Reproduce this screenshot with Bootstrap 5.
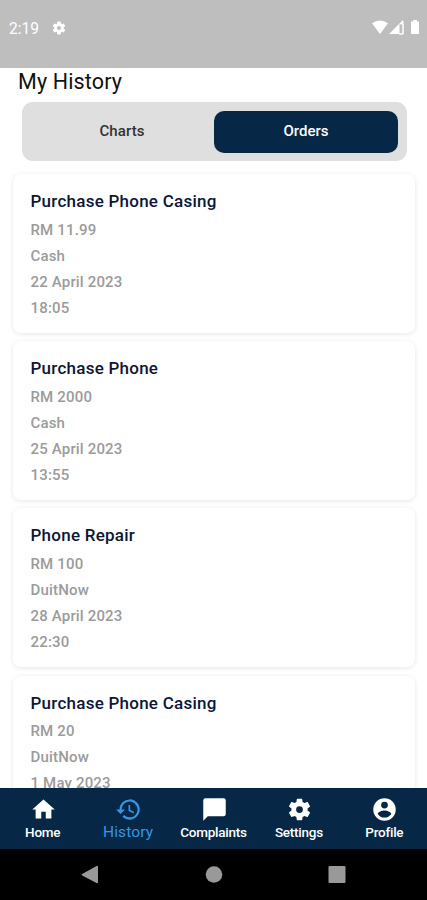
<!DOCTYPE html>
<html lang="en">
<head>
<meta charset="utf-8">
<meta name="viewport" content="width=device-width, initial-scale=1">
<title>My History</title>
<link href="https://cdn.jsdelivr.net/npm/bootstrap@5.3.0/dist/css/bootstrap.min.css" rel="stylesheet">
<style>
body{font-family:Roboto,"Liberation Sans",sans-serif;color:#111;background:#fff}
.phone{height:900px;width:427px}
.status-bar{height:67.5px;background:#bebebe;color:#fff;padding:0 7px 0 9px}
.status-row{height:55px}
.clock{font-size:15.6px;line-height:20px;padding-top:2px}
.page-title{font-size:21.5px;line-height:26px;padding:1px 0 0 18px;margin:0;font-weight:400;letter-spacing:.15px;height:34.5px;color:#111}
.switcher{margin:0 20.5px 0 21.5px;height:59px;padding:8.5px;background:#dfdfdf;border-radius:11px}
.switcher .btn{font-size:15px;font-weight:500;border:0;border-radius:10px;padding:0 0 1px;color:#333;letter-spacing:.1px}
.switcher .btn.active{background:#062745;color:#fff;letter-spacing:0}
.orders{padding:13px 12px 0 13px;gap:8.3px}
.order{flex:none;height:158.9px;border:0;border-radius:8px;padding:15px 17.5px 0;box-shadow:0 1px 5px rgba(0,0,0,.1)}
.order h2{font-size:17px;line-height:24px;margin:0 0 3.500px;font-weight:500;color:#0d1633;letter-spacing:.25px}
.order p{font-size:15px;line-height:26.1px;margin:0;font-weight:500;color:#9b9b9b;letter-spacing:.17px}
.tabs{height:61px;background:#062745}
.tabs a{flex:1 1 0;color:#fff;font-size:13.5px;line-height:18px;font-weight:500;letter-spacing:-.25px;padding-top:8px;width:0}
.tabs a.active{color:#3795e8;font-size:15.5px;font-weight:400;letter-spacing:.1px}
.tabs svg{margin-left:1px}
.system-nav{height:51px;background:#000;padding-left:81px}
</style>
</head>
<body>
<div class="phone d-flex flex-column overflow-hidden">
  <header class="status-bar flex-shrink-0">
    <div class="status-row d-flex align-items-center">
      <span class="clock me-1">2:19</span>
      <svg class="ms-2" width="16" height="16" viewBox="0 0 24 24" fill="#fff"><use href="#gear"/></svg>
      <svg class="ms-auto" width="48" height="15" viewBox="0 0 48 15" fill="#fff"><path d="M0 3.200Q8 -2.200 16 3.200L8 14Z"/><path d="M17 14 31 0V4H27.500V14Z"/><path d="M28.500 4H31V14H27.500M31 .8V14H27" fill="none" stroke="#fff" stroke-width="1"/><path d="M39 1.500H41V0H45V1.500H47V14H39Z"/></svg>
    </div>
  </header>
  <h1 class="page-title flex-shrink-0">My History</h1>
  <div class="switcher d-flex flex-shrink-0">
    <button class="btn flex-fill w-50" type="button">Charts</button>
    <button class="btn flex-fill w-50 active" type="button">Orders</button>
  </div>
  <main class="orders d-flex flex-column flex-grow-1 overflow-hidden">
    <article class="card order"><h2>Purchase Phone Casing</h2><p>RM 11.99</p><p>Cash</p><p>22 April 2023</p><p>18:05</p></article>
    <article class="card order"><h2>Purchase Phone</h2><p>RM 2000</p><p>Cash</p><p>25 April 2023</p><p>13:55</p></article>
    <article class="card order"><h2>Phone Repair</h2><p>RM 100</p><p>DuitNow</p><p>28 April 2023</p><p>22:30</p></article>
    <article class="card order"><h2>Purchase Phone Casing</h2><p>RM 20</p><p>DuitNow</p><p>1 May 2023</p></article>
  </main>
  <nav class="tabs d-flex flex-shrink-0">
    <a href="#" class="d-flex flex-column align-items-center text-decoration-none"><svg width="27" height="27" viewBox="0 0 24 24" fill="currentColor"><path d="M10 20v-6h4v6h5v-8h3L12 3 2 12h3v8z"/></svg>Home</a>
    <a href="#" class="active d-flex flex-column align-items-center text-decoration-none"><svg width="27" height="27" viewBox="0 0 24 24" fill="currentColor"><path d="M13 3a9 9 0 0 0-9 9H1l3.890 3.890.07.14L9 12H6a7 7 0 1 1 2.060 4.940l-1.420 1.420A9 9 0 1 0 13 3zm-1 5v5l4.280 2.540.72-1.210-3.500-2.080V8z"/></svg>History</a>
    <a href="#" class="d-flex flex-column align-items-center text-decoration-none"><svg width="27" height="27" viewBox="0 0 24 24" fill="currentColor"><path d="M20 2H4a2 2 0 0 0-2 2v18l4-4h14a2 2 0 0 0 2-2V4a2 2 0 0 0-2-2z"/></svg>Complaints</a>
    <a href="#" class="d-flex flex-column align-items-center text-decoration-none"><svg width="27" height="27" viewBox="0 0 24 24" fill="currentColor"><path id="gear" d="M19.140 12.940c.04-.3.06-.61.06-.94 0-.32-.02-.64-.07-.94l2.030-1.580c.18-.14.23-.41.12-.61l-1.920-3.320c-.12-.22-.37-.29-.59-.22l-2.390.96c-.5-.38-1.030-.7-1.620-.94l-.36-2.540c-.04-.24-.24-.41-.48-.41h-3.840c-.24 0-.43.17-.47.41l-.36 2.540c-.59.24-1.130.57-1.620.94l-2.390-.96c-.22-.08-.47 0-.59.22L2.740 8.870c-.12.21-.08.47.12.61l2.030 1.580c-.05.3-.09.63-.09.94s.02.64.07.94l-2.030 1.580c-.18.14-.23.41-.12.61l1.920 3.320c.12.22.37.29.59.22l2.390-.96c.5.38 1.030.7 1.620.94l.36 2.540c.05.24.24.41.48.41h3.840c.24 0 .44-.17.47-.41l.36-2.540c.59-.24 1.130-.56 1.620-.94l2.390.96c.22.08.47 0 .59-.22l1.920-3.320c.12-.22.07-.47-.12-.61zM12 15a3 3 0 1 1 0-6 3 3 0 0 1 0 6z"/></svg>Settings</a>
    <a href="#" class="d-flex flex-column align-items-center text-decoration-none"><svg width="27" height="27" viewBox="0 0 24 24" fill="currentColor"><path d="M12 2a10 10 0 1 0 0 20 10 10 0 0 0 0-20zm0 3a3 3 0 1 1 0 6 3 3 0 0 1 0-6zm0 14.200a7.200 7.200 0 0 1-6-3.220c.03-1.990 4-3.080 6-3.080s5.970 1.090 6 3.080a7.200 7.200 0 0 1-6 3.220z"/></svg>Profile</a>
  </nav>
  <footer class="system-nav flex-shrink-0 d-flex align-items-center">
    <svg width="265" height="20" viewBox="0 0 265 20" fill="#999"><path d="M1.200 9 15.500 1Q17 .3 17 2V17Q17 18.800 15.500 18L1.200 10.500Q0 9.800 1.200 9Z"/><circle cx="133" cy="9.500" r="8.300"/><rect x="247.500" y="1" width="17" height="17" rx="1"/></svg>
  </footer>
</div>
<script src="https://cdn.jsdelivr.net/npm/bootstrap@5.3.0/dist/js/bootstrap.bundle.min.js"></script>
</body>
</html>
